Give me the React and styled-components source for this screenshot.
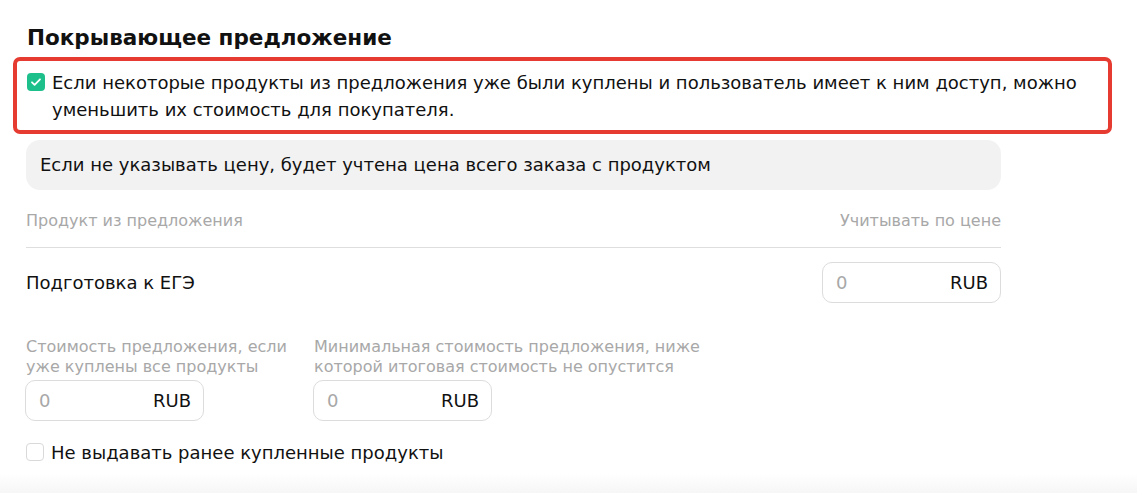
import styled, { createGlobalStyle } from "styled-components";

const GlobalStyle = createGlobalStyle`
  body {
    margin: 0;
    background: #fff;
    font-family: "DejaVu Sans", "Noto Sans", sans-serif;
    color: #111;
  }
`;

const Page = styled.div({
  height: "493px",
  boxSizing: "border-box",
  padding: "23px 0 0 26px",
  background: "linear-gradient(to bottom, #fff 0, #fff 474px, #f6f6f6 493px)",
});

const Title = styled.h2({
  margin: "0 0 4px 1px",
  fontSize: "21.5px",
  fontWeight: 700,
  lineHeight: "30px",
});

const Highlight = styled.div({
  margin: "0 0 6px -13px",
  width: "1099px",
  boxSizing: "border-box",
  border: "4px solid #e53b30",
  borderRadius: "7px",
  padding: "8px 10px 7px 10px",
});

const CheckRow = styled.label({
  display: "flex",
  alignItems: "flex-start",
  gap: "7px",
  fontSize: "18px",
  lineHeight: "27px",
  color: "#111",
});

const Box = styled.span(({ checked }) => ({
  flex: "0 0 auto",
  width: "18px",
  height: "18px",
  marginTop: "4px",
  boxSizing: "border-box",
  borderRadius: "4px",
  background: checked ? "#1dbf8a" : "#fff",
  border: checked ? "none" : "1px solid #d9d9d9",
  display: "flex",
  alignItems: "center",
  justifyContent: "center",
}));

const Note = styled.div({
  width: "975px",
  boxSizing: "border-box",
  background: "#f2f2f2",
  borderRadius: "14px",
  padding: "12px 14px",
  fontSize: "18px",
  lineHeight: "26px",
});

const Table = styled.div({
  width: "975px",
  marginTop: "19px",
});

const HeadRow = styled.div({
  display: "flex",
  justifyContent: "space-between",
  paddingBottom: "14px",
  borderBottom: "1px solid #dedede",
  fontSize: "16px",
  lineHeight: "24px",
  color: "#a8a8a8",
});

const ItemRow = styled.div({
  display: "flex",
  justifyContent: "space-between",
  alignItems: "center",
  paddingTop: "14px",
  fontSize: "18px",
});

const PriceInput = styled.div({
  width: "179px",
  height: "41px",
  boxSizing: "border-box",
  border: "1px solid #dcdcdc",
  borderRadius: "10px",
  display: "flex",
  alignItems: "center",
  justifyContent: "space-between",
  padding: "0 12px 0 13px",
  fontSize: "18px",
});

const Zero = styled.span({
  color: "#a8a8a8",
});

const Fields = styled.div({
  display: "flex",
  gap: "17px",
  marginTop: "34px",
  marginLeft: "-1px",
});

const Field = styled.div({
  display: "flex",
  flexDirection: "column",
  gap: "3px",
});

const FieldLabel = styled.div(({ width }) => ({
  width: width || "270px",
  paddingLeft: "1px",
  fontSize: "16px",
  lineHeight: "20px",
  color: "#a8a8a8",
}));

const Bottom = styled.div({
  marginTop: "18px",
});

const Check = ({ checked }) => (
  <Box checked={checked}>
    {checked && (
      <svg width="12" height="12" viewBox="0 0 12 12" fill="none">
        <path d="M2 6.3l2.6 2.6L10 3.3" stroke="#fff" strokeWidth="1.8" strokeLinecap="round" strokeLinejoin="round" />
      </svg>
    )}
  </Box>
);

const Price = () => (
  <PriceInput>
    <Zero>0</Zero>
    <span>RUB</span>
  </PriceInput>
);

export default function App() {
  return (
    <Page>
      <GlobalStyle />
      <Title>Покрывающее предложение</Title>
      <Highlight>
        <CheckRow>
          <Check checked />
          <span>
            Если некоторые продукты из предложения уже были куплены и пользователь имеет к ним доступ, можно
            уменьшить их стоимость для покупателя.
          </span>
        </CheckRow>
      </Highlight>
      <Note>Если не указывать цену, будет учтена цена всего заказа с продуктом</Note>
      <Table>
        <HeadRow>
          <span>Продукт из предложения</span>
          <span>Учитывать по цене</span>
        </HeadRow>
        <ItemRow>
          <span>Подготовка к ЕГЭ</span>
          <Price />
        </ItemRow>
      </Table>
      <Fields>
        <Field>
          <FieldLabel>Стоимость предложения, если уже куплены все продукты</FieldLabel>
          <Price />
        </Field>
        <Field>
          <FieldLabel width="400px">
            Минимальная стоимость предложения, ниже которой итоговая стоимость не опустится
          </FieldLabel>
          <Price />
        </Field>
      </Fields>
      <Bottom>
        <CheckRow>
          <Check />
          <span>Не выдавать ранее купленные продукты</span>
        </CheckRow>
      </Bottom>
    </Page>
  );
}
